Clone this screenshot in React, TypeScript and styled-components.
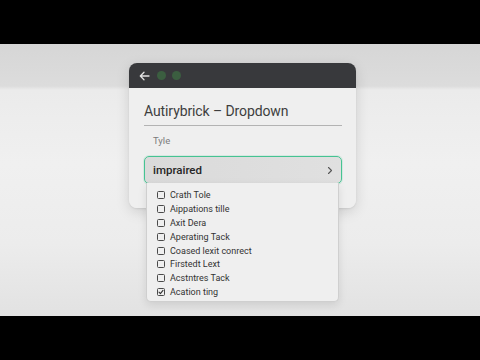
import React, { FC } from "react";
import styled, { createGlobalStyle } from "styled-components";

const GlobalStyle = createGlobalStyle`
  html, body {
    margin: 0;
    padding: 0;
    background: #000;
  }
  body {
    font-family: Roboto, "Noto Sans", "Liberation Sans", sans-serif;
  }
`;

const Screen = styled.div`
  width: 480px;
  height: 360px;
  display: flex;
  flex-direction: column;
  background: #000;
  overflow: hidden;
`;

const Letterbox = styled.div`
  height: 44px;
  flex: none;
  background: #000;
`;

const Stage = styled.div`
  height: 272px;
  flex: none;
  padding: 19px 0 0 129px;
  box-sizing: border-box;
  background: linear-gradient(
    to bottom,
    #d6d6d6 0px,
    #dcdcdc 42px,
    #ebebeb 46px,
    #f0f0f0 120px,
    #ececec 200px,
    #e2e2e2 272px
  );
`;

const Window = styled.div`
  position: relative;
  width: 227px;
  border-radius: 8px;
  box-shadow: 0 4px 14px rgba(0, 0, 0, 0.13), 0 1px 2px rgba(0, 0, 0, 0.08);
`;

const TitleBar = styled.div`
  height: 25px;
  display: flex;
  align-items: center;
  gap: 6px;
  padding-left: 10px;
  background: #38393c;
  border-radius: 8px 8px 0 0;
`;

const Dot = styled.span`
  width: 9px;
  height: 9px;
  border-radius: 50%;
  background: #3b5e40;
`;

const Body = styled.div`
  height: 120px;
  box-sizing: border-box;
  padding: 13px 14px 0 15px;
  background: #efefef;
  border-radius: 0 0 8px 8px;
`;

const Heading = styled.h1`
  margin: 0;
  font-size: 14px;
  font-weight: 400;
  letter-spacing: -0.1px;
  color: #3e3e3e;
  line-height: 20px;
  padding-bottom: 4px;
  border-bottom: 1px solid #b3b3b3;
`;

const Label = styled.div`
  margin: 9px 0 0 9px;
  font-size: 9.5px;
  color: #7b7b7b;
  line-height: 12px;
`;

const Select = styled.div`
  margin-top: 9px;
  height: 28px;
  box-sizing: border-box;
  display: flex;
  align-items: center;
  justify-content: space-between;
  padding: 0 8px 0 8px;
  border: 1.5px solid #46c392;
  border-radius: 5px;
  background: linear-gradient(to right, #dadada, #e0e0e0);
  box-shadow: 0 0 0 1px rgba(70, 195, 146, 0.15);
`;

const Value = styled.span`
  font-size: 11.5px;
  font-weight: 500;
  color: #262626;
`;

const Menu = styled.ul`
  position: absolute;
  left: 17px;
  top: 120px;
  width: 193px;
  margin: 0;
  padding: 5px 0 2px 10px;
  box-sizing: border-box;
  list-style: none;
  background: #efefef;
  border: 1px solid #cfcfcf;
  border-top: none;
  border-radius: 0 0 5px 5px;
  box-shadow: 0 3px 8px rgba(0, 0, 0, 0.1);
`;

const Item = styled.li`
  height: 13.9px;
  display: flex;
  align-items: center;
  gap: 5px;
  font-size: 9px;
  color: #333;
`;

const Box = styled.span`
  width: 8px;
  height: 8px;
  flex: none;
  box-sizing: border-box;
  border: 1.2px solid #4a4a4a;
  border-radius: 1.5px;
  display: flex;
  align-items: center;
  justify-content: center;
`;

const items = [
  { label: "Crath Tole", checked: false },
  { label: "Aippations tille", checked: false },
  { label: "Axit Dera", checked: false },
  { label: "Aperating Tack", checked: false },
  { label: "Coased lexit conrect", checked: false },
  { label: "Firstedt Lext", checked: false },
  { label: "Acstntres Tack", checked: false },
  { label: "Acation ting", checked: true },
];

const BackArrow: FC = () => (
  <svg width="11" height="10" viewBox="0 0 11 10" style={{ marginRight: 1 }}>
    <path
      d="M10 5H1.5M5 1.3L1.3 5 5 8.7"
      fill="none"
      stroke="#e2e2e2"
      strokeWidth="1.3"
      strokeLinecap="round"
      strokeLinejoin="round"
    />
  </svg>
);

const Chevron: FC = () => (
  <svg width="6" height="9" viewBox="0 0 6 9">
    <path
      d="M1.5 1.5L4.5 4.5 1.5 7.5"
      fill="none"
      stroke="#555"
      strokeWidth="1.1"
      strokeLinecap="round"
      strokeLinejoin="round"
    />
  </svg>
);

const Check: FC = () => (
  <svg width="6" height="6" viewBox="0 0 6 6">
    <path
      d="M1 3.2L2.4 4.6 5 1.4"
      fill="none"
      stroke="#333"
      strokeWidth="1.1"
      strokeLinecap="round"
      strokeLinejoin="round"
    />
  </svg>
);

const App: FC = () => {
  return (
    <Screen>
      <GlobalStyle />
      <Letterbox />
      <Stage>
        <Window>
          <TitleBar>
            <BackArrow />
            <Dot />
            <Dot />
          </TitleBar>
          <Body>
            <Heading>Autirybrick – Dropdown</Heading>
            <Label>Tyle</Label>
            <Select>
              <Value>impraired</Value>
              <Chevron />
            </Select>
          </Body>
          <Menu>
            {items.map((item) => (
              <Item key={item.label}>
                <Box>{item.checked && <Check />}</Box>
                {item.label}
              </Item>
            ))}
          </Menu>
        </Window>
      </Stage>
      <Letterbox />
    </Screen>
  );
};

export default App;
